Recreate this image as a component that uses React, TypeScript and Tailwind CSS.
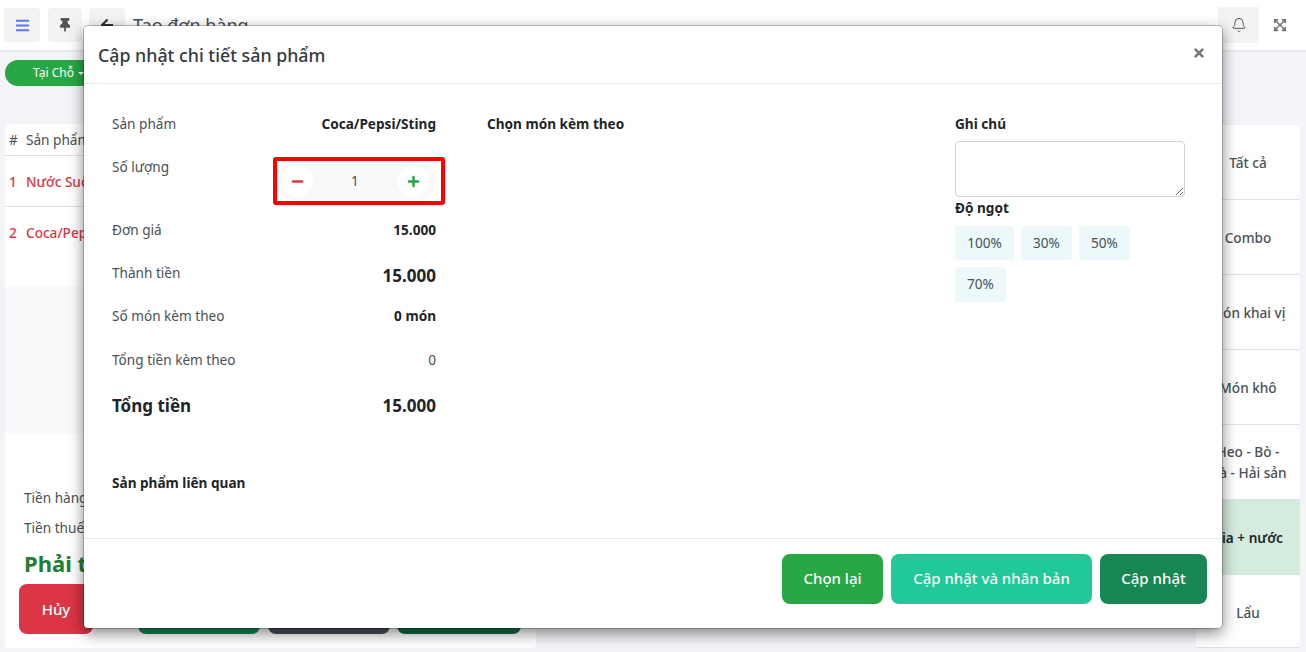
import { FaArrowLeft, FaBars, FaExpandArrowsAlt, FaMinus, FaPlus, FaThumbtack, FaTimes } from "react-icons/fa"
import { Bell } from "lucide-react"

const categories = [
  { label: "Tất cả", cls: "h-[75px]" },
  { label: "Combo", cls: "h-[75px]" },
  { label: "Món khai vị", cls: "h-[75px]" },
  { label: "Món khô", cls: "h-[75px]" },
  { label: "Heo - Bò - Gà - Hải sản", cls: "h-[75px] px-3" },
  { label: "Bia + nước", cls: "h-[75px] bg-[#d4ecdd] font-semibold text-[#212529]" },
  { label: "Lẩu", cls: "h-[73px] pt-[2px]" },
]

const sweetness = [
  { label: "100%", cls: "w-[59px] h-[34px]" },
  { label: "30%", cls: "w-[51px] h-[34px]" },
  { label: "50%", cls: "w-[51px] h-[34px]" },
  { label: "70%", cls: "w-[51px] h-[35px]" },
]

function Background() {
  return (
    <div className="flex h-[652px] w-[1306px] flex-col overflow-hidden bg-[#f3f4f8]">
      <header className="flex h-[52px] shrink-0 items-center border-b-2 border-[#e9e9ef] bg-white">
        <button className="ml-1 flex h-[34px] w-9 items-center justify-center rounded bg-[#f3f3f3] text-[#5b73f5]">
          <FaBars className="text-[15px]" />
        </button>
        <button className="ml-2 flex h-[34px] w-[34px] items-center justify-center rounded bg-[#f3f3f3] text-[#555]">
          <FaThumbtack className="text-sm" />
        </button>
        <button className="ml-[7px] flex h-[34px] w-9 items-center justify-center rounded bg-[#f3f3f3] text-[#333]">
          <FaArrowLeft className="text-sm" />
        </button>
        <span className="ml-2 text-lg text-[#495057]">Tạo đơn hàng</span>
        <div className="ml-auto mr-[6px] flex items-center">
          <div className="flex h-9 w-[41px] items-center justify-center bg-[#f3f3f3] text-[#555]">
            <Bell size={16} strokeWidth={1.5} />
          </div>
          <div className="flex h-9 w-[41px] items-center justify-center text-[#777]">
            <FaExpandArrowsAlt className="text-sm" />
          </div>
        </div>
      </header>

      <div className="flex min-h-0 flex-1 justify-between pl-[5px] pr-[6px]">
        <div className="flex w-[531px] flex-col pb-1">
          <div className="mt-2 flex h-[26px] w-[120px] items-center gap-1 rounded-full bg-[#28a745] pl-7 text-xs text-white">
            <span>Tại Chỗ</span>
            <span className="h-0 w-0 border-x-[3px] border-t-[3px] border-x-transparent border-t-white" />
          </div>
          <div className="mt-[38px] flex h-[32px] items-center rounded-t border-b border-[#dee2e6] bg-white pl-1 pt-[2px] text-[13.6px] text-[#495057]">
            <span className="w-[17px]">#</span>
            <span>Sản phẩm</span>
          </div>
          <div className="flex h-[51px] items-center border-b border-[#dee2e6] bg-white pl-1 pt-[2px] text-[13.6px] font-medium text-[#dc3545]">
            <span className="w-[17px]">1</span>
            <span>Nước Suối</span>
          </div>
          <div className="flex h-[80px] items-start bg-white pl-1 pt-4 text-[13.6px] font-medium text-[#dc3545]">
            <span className="w-[17px]">2</span>
            <span>Coca/Pepsi/Sting</span>
          </div>
          <div className="h-[146px] bg-[#f8f9fa]" />
          <div className="flex flex-1 flex-col rounded-b bg-white pl-[14px] pt-[50px]">
            <div className="ml-[5px] text-[13.6px] leading-[30px] text-[#495057]">Tiền hàng</div>
            <div className="ml-[5px] text-[13.6px] leading-[30px] text-[#495057]">Tiền thuế</div>
            <div className="ml-[5px] mt-[2px] text-[22px] font-bold leading-[36px] text-[#1e7e34]">Phải thu</div>
            <div className="mt-[3px] flex">
              <button className="h-[50px] w-[74px] rounded-lg bg-[#dc3545] text-[15px] font-medium text-white">Hủy</button>
              <button className="ml-[45px] h-[50px] w-[122px] rounded-lg bg-[#198754]" />
              <button className="ml-2 h-[50px] w-[122px] rounded-lg bg-[#495057]" />
              <button className="ml-[7px] h-[50px] w-[124px] rounded-lg bg-[#146c43]" />
            </div>
          </div>
        </div>

        <div className="mt-[73px] flex w-[104px] flex-col self-start bg-white">
          {categories.map((c) => (
            <div key={c.label} className={`flex items-center justify-center border-b border-[#dee2e6] text-center text-[13.6px] leading-[21px] ${c.label === "Bia + nước" ? "" : "font-medium text-[#495057]"} ${c.cls}`}>
              {c.label}
            </div>
          ))}
        </div>
      </div>
    </div>
  )
}

function Row({ label, value, className = "", valueClass = "font-bold text-[13.6px]" }: { label: string; value: string; className?: string; valueClass?: string }) {
  return (
    <div className={`flex items-center justify-between ${className}`}>
      <span className="text-[13.6px] text-[#495057]">{label}</span>
      <span className={`text-[#212529] ${valueClass}`}>{value}</span>
    </div>
  )
}

function Modal() {
  return (
    <div className="absolute left-[84px] top-[26px] flex h-[602px] w-[1138px] flex-col rounded bg-white shadow-[0_0_0_1px_rgba(0,0,0,0.2),0_5px_15px_rgba(0,0,0,0.5)]">
      <div className="flex h-[58px] shrink-0 items-center justify-between border-b border-[#e9e9ef] pl-[14px] pr-4">
        <h5 className="mt-[2px] text-[17.8px] font-medium text-[#343a40]">Cập nhật chi tiết sản phẩm</h5>
        <FaTimes className="-mt-1 text-sm text-[#777]" />
      </div>

      <div className="relative flex flex-1 px-7">
        <div className="w-[324px] shrink-0 pt-[30px]">
          <Row label="Sản phẩm" value="Coca/Pepsi/Sting" className="h-[20px]" />
          <div className="mt-[23px] flex justify-between">
            <span className="text-[13.6px] leading-5 text-[#495057]">Số lượng</span>
            <div className="-mr-[9px] flex h-12 w-[172px] items-center rounded-[3px] border-4 border-[#ff0000] text-[13.6px] text-[#495057]">
              <div className="flex h-full w-[159px] items-center justify-between rounded-full bg-[#f8f9fa] pl-1 pr-[7px]">
                <span className="flex h-8 w-8 items-center justify-center rounded-full bg-white text-[#dc3545]">
                  <FaMinus className="text-[13px]" />
                </span>
                <span>1</span>
                <span className="flex h-8 w-8 items-center justify-center rounded-full bg-white text-[#28a745]">
                  <FaPlus className="text-[13px]" />
                </span>
              </div>
            </div>
          </div>
          <Row label="Đơn giá" value="15.000" className="mt-[15px] h-[20px]" />
          <div className="mt-[23px] flex h-[20px] items-center justify-between">
            <span className="text-[13.6px] text-[#495057]">Thành tiền</span>
            <span className="mt-[6px] text-[17px] font-bold text-[#212529]">15.000</span>
          </div>
          <Row label="Số món kèm theo" value="0 món" className="mt-[23px] h-[20px]" />
          <Row label="Tổng tiền kèm theo" value="0" valueClass="text-[13.6px] font-normal text-[#495057]" className="mt-6 h-[20px]" />
          <div className="mt-[26px] flex h-[20px] items-center justify-between text-[17px] font-bold text-[#212529]">
            <span>Tổng tiền</span>
            <span>15.000</span>
          </div>
          <div className="mt-[57px] text-[13.6px] font-bold leading-5 text-[#212529]">Sản phẩm liên quan</div>
        </div>

        <div className="ml-[51px] w-[468px] shrink-0 pt-[30px]">
          <div className="text-[13.6px] font-bold leading-5 text-[#212529]">Chọn món kèm theo</div>
        </div>

        <div className="w-[230px] shrink-0 pt-[30px]">
          <div className="text-[13.6px] font-bold leading-5 text-[#212529]">Ghi chú</div>
          <textarea className="mt-[7px] block h-[56px] w-full rounded border border-[#ced4da] bg-white" />
          <div className="mt-[1px] text-[13.6px] font-bold leading-5 text-[#212529]">Độ ngọt</div>
          <div className="mt-2 flex flex-wrap gap-[7px] text-[13.6px] text-[#495057]">
            {sweetness.map((s) => (
              <span key={s.label} className={`flex items-center justify-center rounded bg-[#ecf8f9] ${s.cls}`}>
                {s.label}
              </span>
            ))}
          </div>
        </div>
      </div>

      <div className="flex h-[90px] shrink-0 items-center justify-end gap-2 border-t border-[#e9e9ef] pb-[10px] pr-[15px] text-[15px] font-medium text-white">
        <button className="h-[50px] w-[101px] rounded-lg bg-[#28a745]">Chọn lại</button>
        <button className="h-[50px] w-[201px] rounded-lg bg-[#20c997]">Cập nhật và nhân bản</button>
        <button className="h-[50px] w-[107px] rounded-lg bg-[#198754]">Cập nhật</button>
      </div>
    </div>
  )
}

export default function App() {
  return (
    <div className="relative h-[652px] w-[1306px] overflow-hidden font-['Noto_Sans',sans-serif]">
      <Background />
      <Modal />
    </div>
  )
}
